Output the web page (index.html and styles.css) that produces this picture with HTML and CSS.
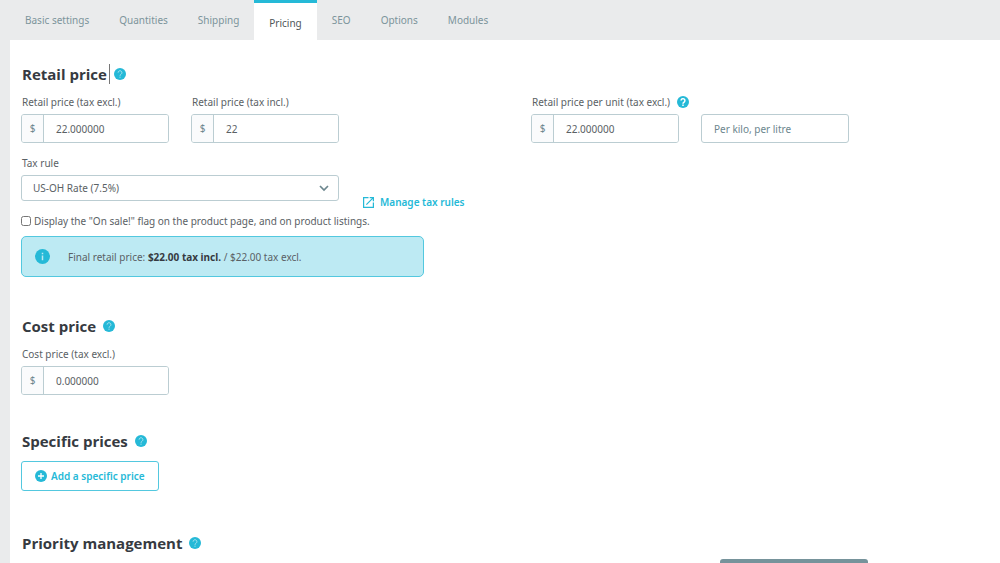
FILE: index.html
```html
<!DOCTYPE html>
<html lang="en">
<head>
<meta charset="utf-8">
<title>Product pricing</title>
<link rel="stylesheet" href="styles.css">
</head>
<body>
<svg class="sprite" aria-hidden="true">
  <symbol id="help" viewBox="0 0 24 24"><circle cx="12" cy="12" r="12" fill="#25b9d7"/><path d="M8.2 9.3a3.8 3.8 0 1 1 6.1 3c-1.400 1-2.300 1.600-2.300 3.200M12 17.300v2.200" fill="none" stroke="currentColor" stroke-width="2"/></symbol>
  <symbol id="help-bold" viewBox="0 0 24 24"><circle cx="12" cy="12" r="12" fill="#25b9d7"/><path d="M8.200 9.200a3.800 3.800 0 1 1 6.100 3c-1.400 1-2.300 1.600-2.300 3.300M12 17v3" fill="none" stroke="#fff" stroke-width="3"/></symbol>
</svg>
<nav class="tabs">
  <a class="tab" href="#basic">Basic settings</a>
  <a class="tab" href="#quantities">Quantities</a>
  <a class="tab" href="#shipping">Shipping</a>
  <a class="tab tab-active" href="#pricing" aria-current="page">Pricing</a>
  <a class="tab" href="#seo">SEO</a>
  <a class="tab" href="#options">Options</a>
  <a class="tab" href="#modules">Modules</a>
</nav>
<main class="panel">
  <section class="section retail">
    <h2 class="heading">Retail price<span class="caret"></span><svg class="help"><use href="#help"/></svg></h2>
    <div class="grid">
      <div class="field">
        <label class="label" for="excl">Retail price (tax excl.)</label>
        <div class="money"><span class="unit">$</span><input class="input" id="excl" value="22.000000"></div>
      </div>
      <div class="field">
        <label class="label" for="incl">Retail price (tax incl.)</label>
        <div class="money"><span class="unit">$</span><input class="input" id="incl" value="22"></div>
      </div>
      <div class="field unit-price">
        <label class="label label-help" for="per-unit">Retail price per unit (tax excl.)<svg class="help help-near"><use href="#help-bold"/></svg></label>
        <div class="money"><span class="unit">$</span><input class="input" id="per-unit" value="22.000000"></div>
      </div>
      <div class="field field-end">
        <input class="input input-alone" aria-label="Unit" placeholder="Per kilo, per litre">
      </div>
    </div>
    <div class="tax-row">
      <div class="field tax-field">
        <label class="label" for="rule">Tax rule</label>
        <div class="select-wrap">
          <select class="select" id="rule"><option>US-OH Rate (7.5%)</option></select>
          <svg class="chevron" viewBox="0 0 10 7"><path d="M1 1l4 4 4-4" fill="none" stroke="#6c868e" stroke-width="1.700"/></svg>
        </div>
      </div>
      <a class="link" href="#taxes"><svg class="link-icon" viewBox="3 3 18 18"><path fill="currentColor" d="M19 19H5V5h7V3H3v18h18v-9h-2v7zM14 3v2h3.600l-9.800 9.800 1.400 1.400L19 6.400V10h2V3h-7z"/></svg>Manage tax rules</a>
    </div>
    <label class="check"><input class="checkbox" type="checkbox">Display the "On sale!" flag on the product page, and on product listings.</label>
    <div class="alert">
      <svg class="alert-icon" viewBox="0 0 24 24"><circle cx="12" cy="12" r="12" fill="#25b9d7"/><path d="M12 6v2.400M12 10.500V18" stroke="#bdeaf3" stroke-width="2.400"/></svg>
      <p class="alert-text">Final retail price: <strong>$22.00 tax incl.</strong> / $22.00 tax excl.</p>
    </div>
  </section>
  <section class="section cost">
    <h2 class="heading">Cost price<svg class="help"><use href="#help"/></svg></h2>
    <div class="grid">
      <div class="field">
        <label class="label" for="cost">Cost price (tax excl.)</label>
        <div class="money"><span class="unit">$</span><input class="input" id="cost" value="0.000000"></div>
      </div>
    </div>
  </section>
  <section class="section specific">
    <h2 class="heading">Specific prices<svg class="help"><use href="#help"/></svg></h2>
    <button class="add" type="button"><svg class="add-icon" viewBox="0 0 24 24"><circle cx="12" cy="12" r="12" fill="currentColor"/><path d="M12 6v12M6 12h12" stroke="#fff" stroke-width="2.600"/></svg>Add a specific price</button>
  </section>
  <section class="section">
    <h2 class="heading">Priority management<svg class="help"><use href="#help"/></svg></h2>
  </section>
</main>
<button class="dock" type="button" aria-label="Save"></button>
</body>
</html>
```
FILE: styles.css
```css
* { box-sizing: border-box; }
body {
  margin: 0;
  height: 100vh;
  overflow: hidden;
  display: flex;
  flex-direction: column;
  background: #eaebec;
  color: #5a6165;
  font: 10px/16px "Noto Sans", "Open Sans", sans-serif;
}
.sprite { position: absolute; width: 0; height: 0; }
.tabs { display: flex; height: 40px; flex: none; padding-left: 10px; }
.tab {
  display: flex;
  align-items: center;
  padding: 0 15px;
  color: #7c949b;
  text-decoration: none;
}
.tab-active {
  padding-top: 2px;
  border-top: 3px solid #25b9d7;
  background: #fff;
  color: #4f5659;
}
.panel { flex: 1; min-height: 0; margin-left: 10px; padding: 24px 12px 0 11px; background: #fff; }
.heading {
  display: flex;
  align-items: center;
  margin: 0 0 10px;
  padding-left: 1px;
  color: #363a41;
  font: 700 15px/20px "Open Sans", sans-serif;
}
.help { flex: none; width: 12px; height: 12px; margin-left: 7px; color: #a8e3ef; }
.caret { width: 1px; height: 20px; margin-left: 2px; background: #777; }
.caret + .help { margin-left: 4px; }
.label-help { display: flex; align-items: center; }
.help-near { margin-left: 7px; }
.grid { display: grid; grid-template-columns: repeat(5, 148px); column-gap: 22px; }
.field { display: flex; flex-direction: column; gap: 4px; }
.label { padding-left: 1px; white-space: nowrap; }
.unit-price { grid-column: 4; }
.field-end { justify-content: flex-end; }
.money {
  display: flex;
  height: 29px;
  border: 1px solid #bbcdd2;
  border-radius: 3px;
  overflow: hidden;
}
.unit {
  flex: none;
  width: 22px;
  border-right: 1px solid #bbcdd2;
  background: #fafbfc;
  color: #6c868e;
  line-height: 27px;
  text-align: center;
}
.input {
  flex: 1;
  min-width: 0;
  padding: 0 12px;
  border: 0;
  background: #fff;
  color: #5a6165;
  font: inherit;
}
.input::placeholder { color: #6c868e; opacity: 1; }
.input-alone { flex: none; height: 29px; border: 1px solid #bbcdd2; border-radius: 3px; }
.tax-row { display: flex; align-items: flex-end; gap: 24px; margin-top: 12px; }
.tax-field { width: 318px; }
.select-wrap { display: grid; align-items: center; }
.select {
  grid-area: 1 / 1;
  height: 26px;
  padding: 0 11px;
  border: 1px solid #bbcdd2;
  border-radius: 3px;
  background: #fff;
  color: #5a6165;
  font: inherit;
  appearance: none;
}
.chevron { grid-area: 1 / 1; justify-self: end; width: 10px; height: 7px; margin-right: 10px; pointer-events: none; }
.link {
  display: flex;
  align-items: center;
  gap: 6px;
  margin-bottom: -9px;
  color: #25b9d7;
  font-weight: 600;
  text-decoration: none;
}
.link-icon { width: 11px; height: 11px; }
.check { display: flex; align-items: center; gap: 3px; margin-top: 12px; }
.checkbox { width: 10px; height: 10px; margin: 0; }
.alert {
  display: flex;
  align-items: center;
  gap: 18px;
  width: 403px;
  height: 41px;
  margin-top: 7px;
  padding-left: 13px;
  border: 1px solid #53c8df;
  border-radius: 5px;
  background: #bdeaf3;
}
.alert-icon { width: 15px; height: 15px; }
.alert-text { margin: 0; }
.alert strong { color: #363a41; }
.cost { margin-top: 39px; }
.specific { margin: 36px 0 42px; }
.add {
  display: flex;
  align-items: center;
  gap: 4px;
  height: 30px;
  padding: 0 13px;
  border: 1px solid #53c8df;
  border-radius: 3px;
  background: #fff;
  color: #25b9d7;
  font: inherit;
  font-weight: 600;
}
.add-icon { width: 12px; height: 12px; }
.dock {
  position: fixed;
  left: 72%;
  bottom: 0;
  width: 148px;
  height: 4px;
  padding: 0;
  border: 0;
  border-radius: 3px 3px 0 0;
  background: #76939b;
}
```
